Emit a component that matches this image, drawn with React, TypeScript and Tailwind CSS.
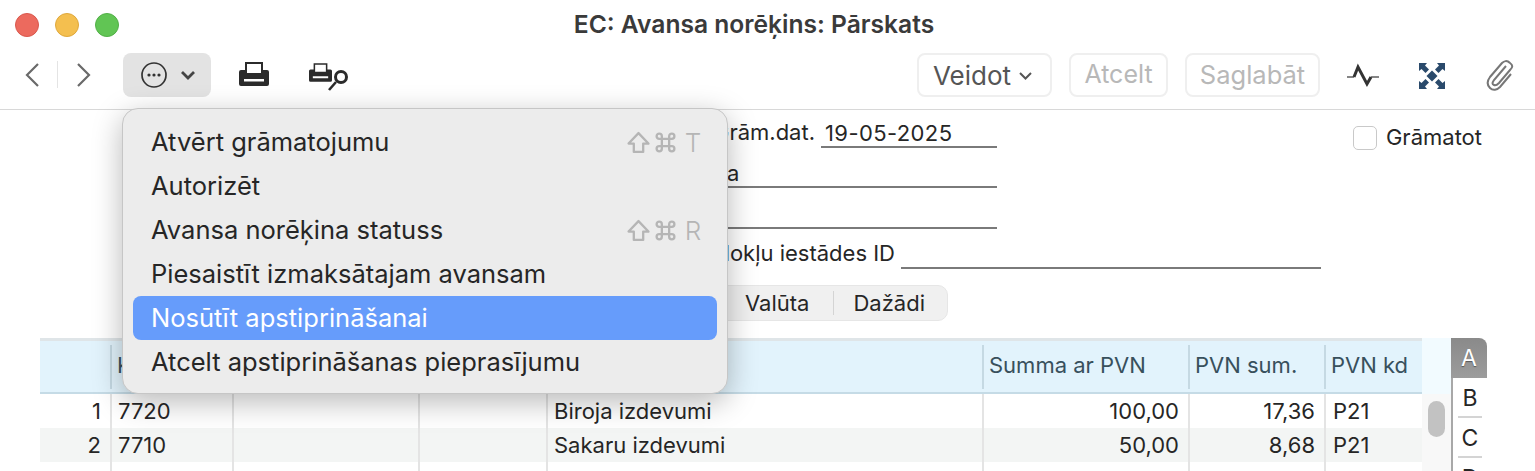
import React from 'react';

const menuItems = [
  { label: 'Atvērt grāmatojumu', key: 'T' },
  { label: 'Autorizēt' },
  { label: 'Avansa norēķina statuss', key: 'R' },
  { label: 'Piesaistīt izmaksātajam avansam' },
  { label: 'Nosūtīt apstiprināšanai', active: true },
  { label: 'Atcelt apstiprināšanas pieprasījumu' },
];

const gridCols = 'grid grid-cols-[70px_122px_186px_128px_436px_206px_136px_98px]';

const rows = [
  { n: '1', acc: '7720', name: 'Biroja izdevumi', sum: '100,00', vat: '17,36', code: 'P21', bg: 'bg-white' },
  { n: '2', acc: '7710', name: 'Sakaru izdevumi', sum: '50,00', vat: '8,68', code: 'P21', bg: 'bg-[#f3f5f4]' },
  { n: '', acc: '', name: '', sum: '', vat: '', code: '', bg: 'bg-white' },
];

function ShiftIcon() {
  return (
    <svg width="23" height="23" viewBox="0 0 22 22" fill="none" stroke="#b5b5b5" strokeWidth="2.2" strokeLinejoin="round">
      <path d="M11 2 L20.5 12 H15.5 V20 H6.5 V12 H1.5 Z" />
    </svg>
  );
}

function CmdIcon() {
  return (
    <svg width="23" height="23" viewBox="0 0 22 22" fill="none" stroke="#b5b5b5" strokeWidth="2.2">
      <path d="M7.5 7.5 H14.5 V14.5 H7.5 Z M7.5 7.5 H5 A2.5 2.5 0 1 1 7.5 5 Z M14.5 7.5 V5 A2.5 2.5 0 1 1 17 7.5 Z M14.5 14.5 H17 A2.5 2.5 0 1 1 14.5 17 Z M7.5 14.5 V17 A2.5 2.5 0 1 1 5 14.5 Z" />
    </svg>
  );
}

function PrinterIcon({ w, h }: { w: number; h: number }) {
  return (
    <svg width={w} height={h} viewBox="0 0 30 24">
      <path fillRule="evenodd" fill="#2b2b2b" d="M6 0 H24 V8 H28 Q30 8 30 10 V22 Q30 24 28 24 H2 Q0 24 0 22 V10 Q0 8 2 8 H6 Z M8 2 V11 H22 V2 Z M5 17 V19.5 H25 V17 Z" />
    </svg>
  );
}

export default function App() {
  return (
    <div className="relative w-[1535px] h-[471px] overflow-hidden bg-white text-[#262626] font-['Inter','Liberation_Sans',sans-serif]">
      {/* title bar */}
      <div className="relative h-[53px] flex items-center justify-center pr-[27px]">
        <div className="absolute left-[15px] top-[13px] flex gap-[16px]">
          <span className="w-[24px] h-[24px] rounded-full bg-[#ec6a5e] border border-[#d9584d]" />
          <span className="w-[24px] h-[24px] rounded-full bg-[#f4bf4f] border border-[#dfa83c]" />
          <span className="w-[24px] h-[24px] rounded-full bg-[#61c554] border border-[#52b047]" />
        </div>
        <h1 className="text-[24.6px] font-semibold text-[#3a3a3a] -mt-[4px]">EC: Avansa norēķins: Pārskats</h1>
      </div>

      {/* toolbar */}
      <div className="h-[57px] border-b border-[#d8d8d8] flex items-start pl-[25px] pr-[21px]">
        <svg width="14" height="24" viewBox="0 0 14 24" fill="none" stroke="#6a6a6a" strokeWidth="2.2" className="mt-[10px]">
          <path d="M13 1 L2 12 L13 23" />
        </svg>
        <div className="w-px h-[27px] bg-[#e4e4e4] ml-[18px] mt-[8px]" />
        <svg width="14" height="24" viewBox="0 0 14 24" fill="none" stroke="#6a6a6a" strokeWidth="2.2" className="ml-[19px] mt-[10px]">
          <path d="M1 1 L12 12 L1 23" />
        </svg>
        <div className="ml-[32px] w-[88px] h-[44px] rounded-[8px] bg-[#e3e3e3] flex items-center pl-[18px]">
          <svg width="26" height="26" viewBox="0 0 26 26" fill="none" stroke="#333" strokeWidth="1.7">
            <circle cx="13" cy="13" r="12" />
            <circle cx="8" cy="13" r="1.6" fill="#333" stroke="none" />
            <circle cx="13" cy="13" r="1.6" fill="#333" stroke="none" />
            <circle cx="18" cy="13" r="1.6" fill="#333" stroke="none" />
          </svg>
          <svg width="14" height="9" viewBox="0 0 14 9" fill="none" stroke="#444" strokeWidth="2.8" className="ml-[14px]">
            <path d="M1 1 L7 7 L13 1" />
          </svg>
        </div>
        <div className="ml-[28px] mt-[9px]">
          <PrinterIcon w={30} h={24} />
        </div>
        <div className="relative ml-[40px] mt-[10px] w-[40px] h-[28px]">
          <PrinterIcon w={23} h={19} />
          <svg width="22" height="24" viewBox="0 0 22 24" fill="none" stroke="#2b2b2b" className="absolute left-[18px] top-[5px]">
            <circle cx="14" cy="9" r="5.5" strokeWidth="3" />
            <path d="M9 14 L2 22" strokeWidth="2.6" />
          </svg>
        </div>

        <div className="ml-auto flex items-start">
          <div className="w-[135px] h-[44px] rounded-[8px] border-2 border-[#efefef] flex items-center pl-[14px] text-[26px] text-[#555]">
            Veidot
            <svg width="13" height="8" viewBox="0 0 13 8" fill="none" stroke="#555" strokeWidth="2" className="ml-[8px] mt-[2px]">
              <path d="M1 1 L6.5 6.5 L12 1" />
            </svg>
          </div>
          <div className="ml-[17px] w-[99px] h-[44px] rounded-[8px] border-2 border-[#efefef] flex items-center justify-center text-[25px] text-[#b8b8b8]">
            Atcelt
          </div>
          <div className="ml-[17px] w-[135px] h-[44px] rounded-[8px] border-2 border-[#efefef] flex items-center justify-center text-[25.5px] text-[#b8b8b8]">
            Saglabāt
          </div>
          <svg width="32" height="26" viewBox="0 0 32 26" fill="none" stroke="#333" className="ml-[27px] mt-[10px]">
            <path d="M0 14 H7" strokeWidth="1.2" />
            <path d="M7 14 L11 4 L20 21 L24 14" strokeWidth="3" />
            <path d="M24 14 H32" strokeWidth="1.2" />
          </svg>
          <svg width="26" height="26" viewBox="0 0 26 26" fill="#2a4a6b" className="ml-[40px] mt-[10px]">
            <path d="M0 0 H8 L6 2.5 L10 6.5 L6.5 10 L2.5 6 L0 8 Z" />
            <path d="M26 0 H18 L20 2.5 L16 6.5 L19.5 10 L23.5 6 L26 8 Z" />
            <path d="M0 26 H8 L6 23.5 L10 19.5 L6.5 16 L2.5 20 L0 18 Z" />
            <path d="M26 26 H18 L20 23.5 L16 19.5 L19.5 16 L23.5 20 L26 18 Z" />
            <path d="M13 7.5 L18.5 13 L13 18.5 L7.5 13 Z" />
          </svg>
          <svg width="28" height="31" viewBox="0 0 28 31" fill="none" stroke="#777" strokeWidth="2" className="ml-[41px] mt-[7px]">
            <path d="M24 3 C21 0 18 1 16 3 L4 17 C1 21 1 25 4 28 C7 31 11 30 14 27 L25 14 M20 6 L8 20 C6 23 6 24 8 25 C10 26 11 25 13 23 L24 10 C27 7 27 5 24 3" />
          </svg>
        </div>
      </div>

      {/* form */}
      <div className="relative h-[228px] text-[22px]">
        <div className="h-[38px] flex items-end pr-[53px]">
          <span className="w-[815px] text-right mb-[-1px]">Grām.dat.</span>
          <span className="ml-[6px] w-[176px] border-b-2 border-[#7a7a7a] pl-[4px] h-[28px] leading-[26px] tracking-[0.4px]">19-05-2025</span>
          <span className="ml-auto w-[24px] h-[24px] mb-[-2px] rounded-[5px] border border-[#c9c9c9] bg-white" />
          <span className="ml-[9px] leading-[26px] mb-[-2px]">Grāmatot</span>
        </div>
        <div className="h-[40px] flex items-end pl-[640px]">
          <span className="w-[357px] border-b-2 border-[#7a7a7a] h-[28px] leading-[26px] pl-[87px]">a</span>
        </div>
        <div className="h-[41px] flex items-end pl-[640px]">
          <span className="w-[357px] border-b-2 border-[#7a7a7a] h-[28px]" />
        </div>
        <div className="h-[40px] flex items-end">
          <span className="w-[895px] text-right mb-[-1px]">Nodokļu iestādes ID</span>
          <span className="ml-[6px] w-[420px] border-b-2 border-[#7a7a7a] h-[28px]" />
        </div>
        <div className="mt-[16px] ml-[640px] w-[308px] h-[36px] rounded-[10px] bg-[#f0f0f0] border border-[#e6e6e6] flex items-center justify-end pr-[22px]">
          <span>Valūta</span>
          <span className="w-px h-[24px] bg-[#d4d4d4] ml-[24px] mr-[19px]" />
          <span>Dažādi</span>
        </div>
      </div>

      {/* table */}
      <div className="flex pl-[40px] text-[22px]">
        <div className="w-[1382px] border-t-[3px] border-[#dfe5e8]">
          <div className={`${gridCols} h-[53px] bg-[#e2f3fc] border-b-2 border-[#c5dbe6] items-center text-[#38505c]`}>
            <span />
            <span className="h-[44px] border-l-2 border-[#c5d9e3] pl-[5px] leading-[40px]">Konts</span>
            <span />
            <span />
            <span />
            <span className="h-[44px] border-l-2 border-[#c5d9e3] pl-[5px] leading-[40px]">Summa ar PVN</span>
            <span className="h-[44px] border-l-2 border-[#c5d9e3] pl-[5px] leading-[40px]">PVN sum.</span>
            <span className="h-[44px] border-l-2 border-[#c5d9e3] pl-[5px] leading-[40px]">PVN kd</span>
          </div>
          {rows.map((r, i) => (
            <div key={i} className={`${gridCols} h-[34px] leading-[35px] ${r.bg}`}>
              <span className="text-right pr-[9px]">{r.n}</span>
              <span className="border-l-2 border-[#e4e4e4] pl-[6px]">{r.acc}</span>
              <span className="border-l-2 border-[#e4e4e4]" />
              <span className="border-l-2 border-[#e4e4e4]" />
              <span className="border-l-2 border-[#e4e4e4] pl-[6px]">{r.name}</span>
              <span className="border-l-2 border-[#e4e4e4] text-right pr-[9px]">{r.sum}</span>
              <span className="border-l-2 border-[#e4e4e4] text-right pr-[9px]">{r.vat}</span>
              <span className="border-l-2 border-[#e4e4e4] pl-[7px]">{r.code}</span>
            </div>
          ))}
        </div>
        {/* scrollbar */}
        <div className="w-[29px] h-[140px] bg-[#f8f8f8]">
          <div className="h-[56px] bg-[#f2fbff]" />
          <div className="w-[17px] h-[36px] mt-[7px] ml-[6px] rounded-full bg-[#c2c2c2]" />
        </div>
        {/* letter index */}
        <div className="w-[36px] h-[140px] border-l-2 border-[#a8a8a8] rounded-tr-[8px] text-center text-[23px] leading-[40px]">
          <div className="h-[40px] -ml-[2px] rounded-tr-[8px] bg-gradient-to-b from-[#8a8a8a] to-[#9c9c9c] text-white [text-shadow:0_1px_1px_#555]">A</div>
          <div className="h-[40px] mx-[5px] border-b-2 border-[#d4d4d4]">B</div>
          <div className="h-[40px] mx-[5px] border-b-2 border-[#d4d4d4]">C</div>
          <div className="h-[40px]">D</div>
        </div>
      </div>

      {/* dropdown menu */}
      <div className="absolute left-[122px] top-[108px] w-[606px] h-[286px] rounded-[16px] bg-[#ececec] border border-[#c6c6c6] shadow-[0_8px_30px_rgba(0,0,0,0.28)] px-[10px] pt-[11px] text-[25.5px]">
        {menuItems.map((item) => (
          <div
            key={item.label}
            className={`h-[44px] rounded-[8px] pl-[18px] pr-[15px] flex items-center ${item.active ? 'bg-[#669cfb] text-white' : 'text-[#262626]'}`}
          >
            <span>{item.label}</span>
            {item.key && (
              <span className="ml-auto flex items-center gap-[4px] text-[#b5b5b5] text-[26px]">
                <ShiftIcon />
                <CmdIcon />
                <span className="w-[18px] ml-[3px] text-center font-light">{item.key}</span>
              </span>
            )}
          </div>
        ))}
      </div>
    </div>
  );
}
